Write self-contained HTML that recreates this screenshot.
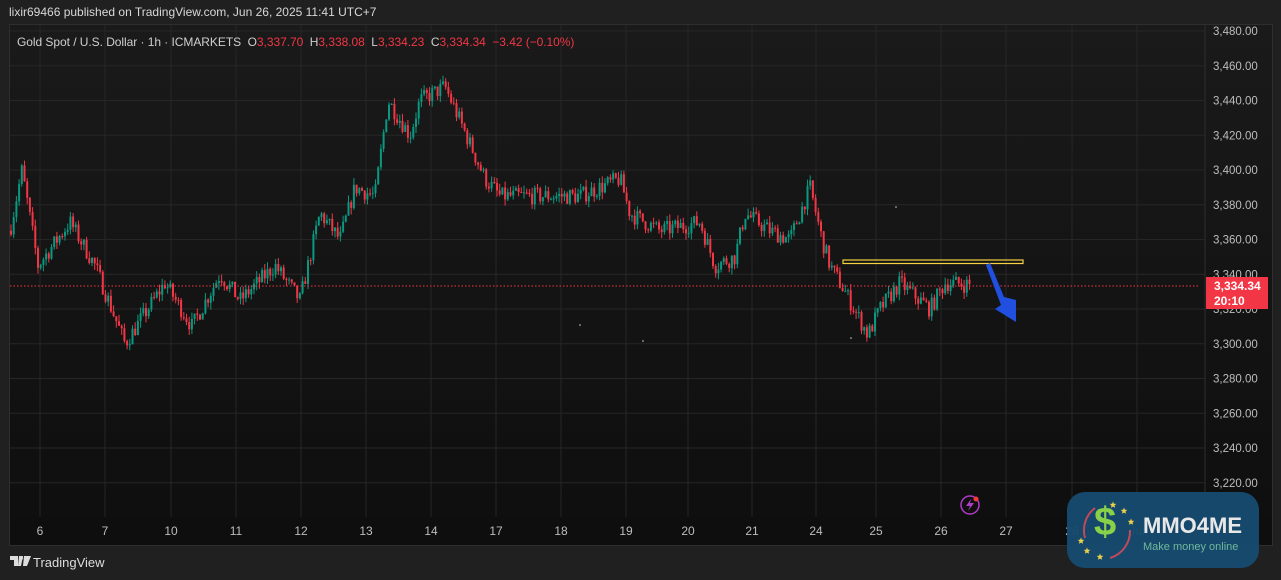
<!DOCTYPE html>
<html><head><meta charset="utf-8"><style>
body{margin:0;width:1281px;height:580px;background:#202020;overflow:hidden;font-family:"Liberation Sans",sans-serif;position:relative}
.t{position:absolute;white-space:nowrap}
</style></head><body>
<div class="t" style="left:9px;top:5px;font-size:12px;color:#d8d8d8">lixir69466 published on TradingView.com, Jun 26, 2025 11:41 UTC+7</div>
<div style="position:absolute;left:9px;top:24px;width:1262px;height:520px;background:linear-gradient(#1a1a1a,#0e0e0e);border:1px solid #2e2e2e"></div>
<svg id="c" style="position:absolute;left:0;top:0" width="1281" height="580"></svg>
<div class="t" style="left:17px;top:35px;font-size:12px;color:#cfcfcf;letter-spacing:-0.05px">Gold Spot / U.S. Dollar · 1h · ICMARKETS &nbsp;O<span style="color:#f23645">3,337.70</span> &nbsp;H<span style="color:#f23645">3,338.08</span> &nbsp;L<span style="color:#f23645">3,334.23</span> &nbsp;C<span style="color:#f23645">3,334.34</span> &nbsp;<span style="color:#f23645">−3.42 (−0.10%)</span></div>
<div style="position:absolute;left:1206px;top:277px;width:62px;height:32px;background:#f23645;color:#fff;font-size:12px;font-weight:bold;line-height:15px;padding-left:8px;box-sizing:border-box;padding-top:2px">3,334.34<br>20:10</div>
<div style="position:absolute;left:1067px;top:492px;width:192px;height:76px;border-radius:18px;background:#174a6e;opacity:.97"></div>
<svg id="lg" style="position:absolute;left:0;top:0" width="1281" height="580"></svg>
<div class="t" style="left:1143px;top:513px;font-size:22px;font-weight:bold;color:#e8e8e8">MMO4ME</div>
<div class="t" style="left:1143px;top:541px;font-size:11px;color:#6fb89a">Make money online</div>
<div class="t" style="left:1094px;top:500px;font-size:40px;font-weight:bold;color:#8ad14a">$</div>
<div class="t" style="left:33px;top:555px;font-size:13px;color:#ddd">TradingView</div>
<svg style="position:absolute;left:10px;top:556px" width="22" height="11"><path d="M0 0H8V10H4V4H0Z M9 0H13L11 10H8Z M14 0H21L17 10H13Z" fill="#ddd"/><circle cx="11" cy="2" r="2" fill="#ddd"/></svg>
<script>
const s=document.getElementById('c');let h='';
const Y=p=>31+(3480-p)*1.7375;
for(let p=3480;p>=3220;p-=20){const y=Y(p);h+=`<line x1="10" x2="1205" y1="${y}" y2="${y}" stroke="#262626"/>`;h+=`<text x="1213" y="${y+4}" fill="#bdbdbd" font-size="11.5" font-family="Liberation Sans">${(p/1000|0)},${String(p%1000).padStart(3,'0')}.00</text>`}
const days=[[40,'6'],[105,'7'],[171,'10'],[236,'11'],[301,'12'],[366,'13'],[431,'14'],[496,'17'],[561,'18'],[626,'19'],[688,'20'],[752,'21'],[816,'24'],[876,'25'],[941,'26'],[1006,'27'],[1072,'28'],[1137,'Jul']];
for(const [x,l] of days){h+=`<line x1="${x}" x2="${x}" y1="25" y2="517" stroke="#262626"/><text x="${x}" y="535" text-anchor="middle" fill="#bdbdbd" font-size="12" font-family="Liberation Sans">${l}</text>`}
h+=`<line x1="1205" x2="1205" y1="25" y2="544" stroke="#2e2e2e"/>`;
const w=[[10,3365],[22,3400],[38,3345],[70,3370],[95,3345],[125,3300],[165,3335],[192,3310],[220,3340],[240,3325],[275,3345],[300,3325],[320,3375],[340,3360],[355,3390],[375,3385],[388,3440],[410,3420],[420,3440],[445,3448],[470,3415],[485,3395],[500,3385],[540,3385],[580,3385],[620,3395],[630,3375],[660,3365],[700,3370],[715,3345],[735,3350],[745,3375],[770,3365],[790,3360],[810,3390],[822,3360],[830,3345],[845,3330],[868,3305],[880,3320],[900,3335],[930,3320],[945,3335],[970,3334]];
let seed=7;const r=()=>{seed=(seed*16807)%2147483647;return seed/2147483647};
const f=x=>{for(let i=0;i<w.length-1;i++)if(x<=w[i+1][0]){const[a,b]=w[i],[c,d]=w[i+1];return b+(d-b)*(x-a)/(c-a)}return 3334};
let prev=f(10);
for(let x=11;x<=970;x+=2.7){const o=prev;let c=f(x)+(r()-.5)*10;const hi=Math.max(o,c)+r()*4,lo=Math.min(o,c)-r()*4;const col=c>=o?'#089981':'#f23645';
h+=`<line x1="${x}" x2="${x}" y1="${Y(hi)}" y2="${Y(lo)}" stroke="${col}"/><rect x="${x-1}" y="${Y(Math.max(o,c))}" width="2" height="${Math.max(1,Math.abs(o-c)*1.7375)}" fill="${col}"/>`;prev=c}
h+=`<line x1="10" x2="1198" y1="286" y2="286" stroke="#f23645" stroke-dasharray="1.5 2"/>`;
h+=`<rect x="843" y="260" width="180" height="3.5" fill="none" stroke="#f5d142" stroke-width="1.2"/>`;
h+=`<polygon points="986,265 990,263 1004,297 1016,300 1016,322 995,309 1001,305" fill="#2150e0"/>`;
h+=`<circle cx="970" cy="505" r="9" fill="none" stroke="#b03cc8" stroke-width="1.5"/><path d="M971 499 L966 506 L970 506 L968 511 L974 503 L970 503Z" fill="#b03cc8"/><circle cx="976" cy="499" r="2.5" fill="#f23645"/>`;
h+=`<circle cx="896" cy="207" r=".8" fill="#ccc"/><circle cx="580" cy="325" r=".8" fill="#ccc"/><circle cx="643" cy="341" r=".8" fill="#ccc"/><circle cx="851" cy="338" r=".8" fill="#ccc"/>`;
s.innerHTML=h;
let g=`<path d="M1095 508 A28 28 0 0 0 1085 538" fill="none" stroke="#c04a5a" stroke-width="2"/><path d="M1110 558 A28 28 0 0 0 1130 530" fill="none" stroke="#c04a5a" stroke-width="2"/>`;
const star=(cx,cy,R)=>{let p=[];for(let i=0;i<10;i++){const a=-Math.PI/2+i*Math.PI/5,rr=i%2?R*0.45:R;p.push((cx+rr*Math.cos(a)).toFixed(1)+','+(cy+rr*Math.sin(a)).toFixed(1))}return `<polygon points="${p.join(' ')}" fill="#e8d04a"/>`};
for(const [x,y] of [[1113,505],[1124,511],[1131,522],[1081,541],[1087,551],[1100,557]])g+=star(x,y,3.5);
document.getElementById('lg').innerHTML=g;
</script>
</body></html>
